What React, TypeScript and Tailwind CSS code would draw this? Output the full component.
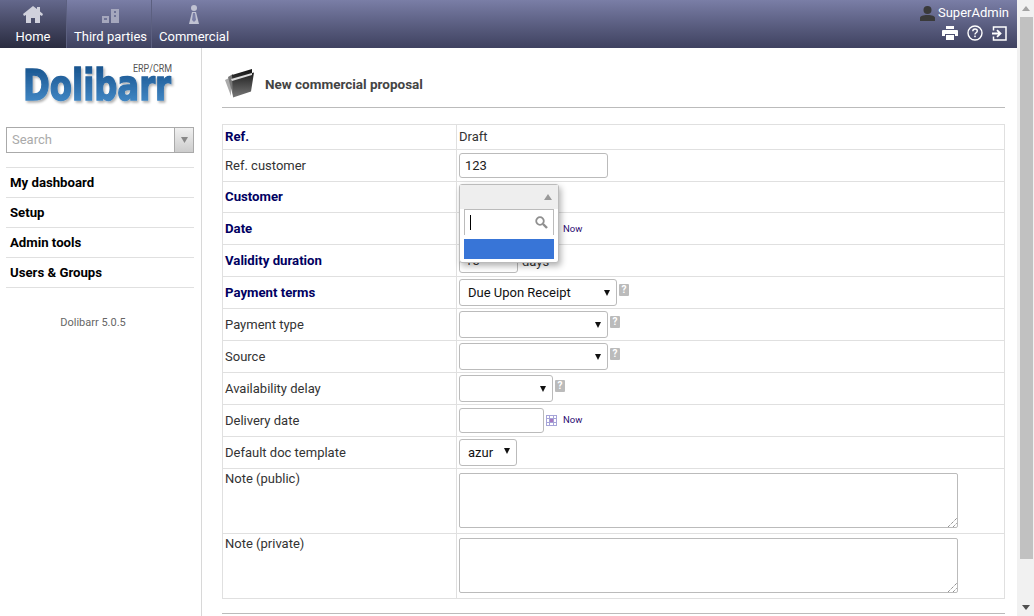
import React from "react";

function Help() {
  return (
    <span className="mt-[5px] inline-flex h-[12px] w-[10px] items-center justify-center rounded-[1px] bg-[#bbbbbb] text-[10px] font-bold leading-none text-white">
      ?
    </span>
  );
}

function Sel({ w, text, help = true, top = "" }: { w: string; text?: string; help?: boolean; top?: string }) {
  return (
    <div className="flex items-start gap-[2px]">
      <div className={`flex h-[27px] items-center justify-between rounded-[3px] border border-[#bbbbbb] pl-[8px] pr-[6px] text-[13px] text-[#111] ${w}`}>
        <span>{text}</span>
        <svg width="6" height="6" viewBox="0 0 6 6" className={top}>
          <path d="M0 0h6L3 6z" fill="#111" />
        </svg>
      </div>
      {help && <Help />}
    </div>
  );
}

function Cal() {
  return (
    <svg width="11" height="11" viewBox="0 0 11 11" className="ml-[2px]" shapeRendering="crispEdges">
      <rect x="0" y="0" width="11" height="11" fill="#a6a4d8" />
      <rect x="1" y="1" width="2" height="2" fill="#fff" />
      <rect x="4" y="1" width="3" height="2" fill="#fff" />
      <rect x="8" y="1" width="2" height="2" fill="#fff" />
      <rect x="1" y="4" width="2" height="3" fill="#fff" />
      <rect x="4" y="4" width="3" height="3" fill="#a878c0" />
      <rect x="8" y="4" width="2" height="3" fill="#fff" />
      <rect x="1" y="8" width="2" height="2" fill="#fff" />
      <rect x="4" y="8" width="3" height="2" fill="#fff" />
      <rect x="8" y="8" width="2" height="2" fill="#fff" />
    </svg>
  );
}

function Area() {
  return (
    <div className="relative h-[55px] w-[499px] -translate-y-[1px] rounded-[2px] border border-[#bbbbbb]">
      <svg width="9" height="9" viewBox="0 0 9 9" className="absolute bottom-0 right-0">
        <path d="M0 9L9 0M5 9L9 5" stroke="#666" strokeWidth="1" strokeDasharray="1 1" />
      </svg>
    </div>
  );
}

function Row({ label, bold, h, children, top }: { label: string; bold?: boolean; h: string; children?: React.ReactNode; top?: boolean }) {
  return (
    <div className={`flex border-b border-[#e0e0e0] ${h}`}>
      <div className={`flex w-[234px] shrink-0 border-r border-[#e0e0e0] pl-[2px] ${top ? "items-start" : "items-center"} ${bold ? "text-[13.2px] font-bold text-[#000061]" : "text-[13px] text-[#333]"}`}>
        {label}
      </div>
      <div className="flex flex-1 items-center pl-[2px] text-[13px] text-[#333]">{children}</div>
    </div>
  );
}

function NavItem({ label, cls, icon }: { label: string; cls: string; icon: React.ReactNode }) {
  return (
    <div className={`flex h-[48px] flex-col items-center ${cls}`}>
      <div className="flex h-[28px] items-center pt-[1px] blur-[0.5px]">{icon}</div>
      <span className="whitespace-nowrap text-[13px] leading-[17px] text-white">{label}</span>
    </div>
  );
}

function Logo() {
  return (
    <svg width="160" height="50" viewBox="0 0 160 50" className="ml-[12px]">
      <defs>
        <linearGradient id="lg" x1="0" y1="0" x2="0" y2="1">
          <stop offset="0" stopColor="#124c86" />
          <stop offset="1" stopColor="#4a92d0" />
        </linearGradient>
        <filter id="ls" x="-5%" y="-5%" width="115%" height="125%">
          <feDropShadow dx="2" dy="2" stdDeviation="1.2" floodColor="#000" floodOpacity="0.3" />
        </filter>
      </defs>
      <text
        transform="translate(5 40) scale(0.77 1)"
        fontFamily="DejaVu Sans"
        fontWeight="bold"
        fontSize="42"
        fill="url(#lg)"
        stroke="url(#lg)"
        strokeWidth="1.4"
        filter="url(#ls)"
      >
        Dolibarr
      </text>
      <text x="115" y="12" fontFamily="Roboto" fontSize="10" textLength="39" lengthAdjust="spacingAndGlyphs" fill="#555">
        ERP/CRM
      </text>
    </svg>
  );
}

export default function App() {
  return (
    <div className="flex h-[616px] w-[1034px] overflow-hidden bg-white font-['Roboto',sans-serif]">
      <div className="flex w-[1017px] shrink-0 flex-col">
        <div className="flex h-[48px] shrink-0 justify-between bg-gradient-to-b from-[#7a7ea6] to-[#3f4260]">
          <div className="flex">
            <NavItem
              label="Home"
              cls="w-[67px] border-r border-[#5c6080] bg-gradient-to-b from-[#64688c] to-[#2a2c40]"
              icon={
                <svg width="20" height="20" viewBox="0 0 20 20">
                  <path d="M10 1L0 9l1 2 2-1v8h5v-5h4v5h5v-8l2 1 1-2-3-2.5V2h-3v2z" fill="#d0d1dc" />
                </svg>
              }
            />
            <NavItem
              label="Third parties"
              cls="w-[85px] border-r border-[#5c6080] pl-[7px] pr-[4px]"
              icon={
                <svg width="20" height="20" viewBox="0 0 20 20" className="mt-[2px]">
                  <path d="M1 10h7v7H1zM10 3h8v14h-8z" fill="#a5a7bd" />
                  <path d="M3 12h3v2H3zM13 5h2v2h-2zM13 9h2v2h-2z" fill="#6f7396" />
                </svg>
              }
            />
            <NavItem
              label="Commercial"
              cls="pl-[7px]"
              icon={
                <svg width="14" height="22" viewBox="0 0 14 22">
                  <circle cx="7" cy="4" r="3" fill="#c0c2d2" />
                  <path d="M5 8h4l3 12H2z" fill="#c0c2d2" />
                  <path d="M6 9h2l1 7-2 2-2-2z" fill="#7a7ea6" />
                </svg>
              }
            />
          </div>
          <div className="flex flex-col items-end pr-[8px] pt-[4px]">
            <div className="flex items-center gap-[3px]">
              <svg width="15" height="16" viewBox="0 0 15 16" className="blur-[0.4px]">
                <circle cx="7.5" cy="5" r="4" fill="#3a3a3a" />
                <path d="M0 16v-3c0-2 3-3 7.5-3S15 11 15 13v3z" fill="#3a3a3a" />
              </svg>
              <span className="text-[13px] leading-[18px] text-white">SuperAdmin</span>
            </div>
            <div className="mr-[2px] mt-[3px] flex items-center gap-[9px] text-white">
              <svg width="16" height="14" viewBox="0 0 16 14">
                <path d="M4 0h8v3H4zM1 4h14a1 1 0 0 1 1 1v5h-3V8H3v2H0V5a1 1 0 0 1 1-1zM4 9h8v5H4z" fill="#fff" />
              </svg>
              <svg width="16" height="16" viewBox="0 0 16 16" fill="none">
                <circle cx="8" cy="8" r="7" stroke="#fff" strokeWidth="1.4" />
                <path d="M5.8 6.2C5.8 4.8 7 4 8 4s2.3.7 2.3 2.1c0 1.7-2.3 1.7-2.3 3.4" stroke="#fff" strokeWidth="1.4" />
                <rect x="7.2" y="10.6" width="1.6" height="1.6" fill="#fff" />
              </svg>
              <svg width="15" height="15" viewBox="0 0 15 15" fill="none">
                <path d="M1.5 4.5V1h12.5v13H1.5v-3.5" stroke="#fff" strokeWidth="1.5" />
                <path d="M0 7.5h7.5M5 4.2l3.5 3.3L5 10.8" stroke="#fff" strokeWidth="1.8" />
              </svg>
            </div>
          </div>
        </div>

        <div className="flex min-h-0 flex-1">
          <div className="w-[202px] shrink-0 border-r border-[#d8d8d8] pl-[6px] pr-[7px]">
            <div className="h-[59px] w-full pt-[12px]">
              <Logo />
            </div>
            <div className="mt-[20px] flex h-[26px] w-[188px] border border-[#aaaaaa]">
              <span className="flex flex-1 items-center pl-[5px] text-[13px] text-[#aaaaaa]">Search</span>
              <div className="flex w-[19px] items-center justify-center border-l border-[#aaaaaa] bg-gradient-to-b from-[#f0f0f0] to-[#cccccc]">
                <svg width="7" height="6" viewBox="0 0 7 6">
                  <path d="M0 0h7L3.5 6z" fill="#888" />
                </svg>
              </div>
            </div>
            <div className="mt-[14px] border-t border-[#e0e0e0]">
              {["My dashboard", "Setup", "Admin tools", "Users & Groups"].map((t) => (
                <div key={t} className="flex h-[30px] items-center border-b border-[#e0e0e0] pl-[4px] text-[13.2px] font-bold text-[#000]">
                  {t}
                </div>
              ))}
            </div>
            <div className="mt-[28px] pr-[14px] text-center text-[11px] leading-[14px] text-[#666]">Dolibarr 5.0.5</div>
          </div>

          <div className="relative min-w-0 flex-1 pl-[20px] pr-[12px]">
            <div className="flex h-[60px] items-center border-b border-[#bbbbbb] pl-[2px] pt-[13px]">
              <svg width="30" height="30" viewBox="0 0 30 30" className="-mt-[3px]">
                <defs>
                  <linearGradient id="fg" x1="0" y1="0" x2="0" y2="1">
                    <stop offset="0" stopColor="#111" />
                    <stop offset="1" stopColor="#777" />
                  </linearGradient>
                </defs>
                <path d="M1 12l6-3v19z" fill="#aaa" />
                <path d="M4 9l5-3v22z" fill="#777" />
                <path d="M8 7l20-6v4l2-.5-3 19-18 6z" fill="url(#fg)" />
                <path d="M7 11l21-6v2L8 13z" fill="#ddd" />
              </svg>
              <span className="ml-[11px] text-[13.5px] font-bold text-[#444]">New commercial proposal</span>
            </div>

            <div className="mt-[16px] border-x border-t border-[#e0e0e0]">
              <Row label="Ref." bold h="h-[25px]">Draft</Row>
              <Row label="Ref. customer" h="h-[32px]">
                <div className="flex h-[25px] w-[149px] items-center rounded-[3px] border border-[#bbbbbb] px-[5px] text-[13px] text-[#222]">123</div>
              </Row>
              <Row label="Customer" bold h="h-[31px]" />
              <Row label="Date" bold h="h-[32px]">
                <div className="ml-[87px] mt-[2px] flex items-center gap-[5px]">
                  <span className="w-[12px]" />
                  <span className="text-[9.5px] text-[#2a0a70]">Now</span>
                </div>
              </Row>
              <Row label="Validity duration" bold h="h-[32px]">
                <div className="flex items-center gap-[4px]">
                  <div className="flex h-[25px] w-[59px] items-center rounded-[3px] border border-[#bbbbbb] pl-[5px] text-[13px]">15</div>
                  <span className="mt-[2px]">days</span>
                </div>
              </Row>
              <Row label="Payment terms" bold h="h-[32px]">
                <Sel w="w-[158px]" text="Due Upon Receipt" />
              </Row>
              <Row label="Payment type" h="h-[32px]"><Sel w="w-[149px]" /></Row>
              <Row label="Source" h="h-[32px]"><Sel w="w-[149px]" /></Row>
              <Row label="Availability delay" h="h-[32px]"><Sel w="w-[94px]" /></Row>
              <Row label="Delivery date" h="h-[32px]">
                <div className="flex items-center">
                  <div className="h-[25px] w-[85px] rounded-[3px] border border-[#bbbbbb]" />
                  <Cal />
                  <span className="ml-[6px] text-[9.5px] text-[#2a0a70]">Now</span>
                </div>
              </Row>
              <Row label="Default doc template" h="h-[32px]">
                <Sel w="w-[58px]" text="azur" help={false} top="-mt-[3px]" />
              </Row>
              <Row label="Note (public)" h="h-[65px]" top>
                <Area />
              </Row>
              <Row label="Note (private)" h="h-[65px]" top>
                <Area />
              </Row>
            </div>
            <div className="mt-[14px] border-b border-[#bbbbbb]" />

            <div className="absolute left-[257px] top-[136px] h-[79px] w-[100px] rounded-[3px] border border-[#bbbbbb] bg-white shadow-[2px_3px_6px_rgba(0,0,0,0.3)]">
              <div className="flex h-[24px] items-center justify-end bg-[#eeeeee] pr-[6px]">
                <svg width="8" height="6" viewBox="0 0 8 6">
                  <path d="M0 6h8L4 0z" fill="#999" />
                </svg>
              </div>
              <div className="mx-[4px] flex h-[26px] items-center justify-between border border-b-0 border-[#bbbbbb] pl-[5px] pr-[5px]">
                <span className="h-[15px] w-px bg-black" />
                <svg width="13" height="13" viewBox="0 0 13 13" fill="none">
                  <circle cx="5" cy="5" r="3.8" stroke="#8f8f8f" strokeWidth="1.8" />
                  <path d="M8 8l4 4" stroke="#8f8f8f" strokeWidth="2.4" />
                </svg>
              </div>
              <div className="mx-[4px] mt-[4px] h-[20px] bg-[#3875d7]" />
            </div>
          </div>
        </div>
      </div>

      <div className="flex w-[17px] shrink-0 flex-col items-center bg-[#f1f1f1]">
        <div className="flex h-[17px] items-center justify-center">
          <svg width="8" height="5" viewBox="0 0 8 5"><path d="M0 5h8L4 0z" fill="#a3a3a3" /></svg>
        </div>
        <div className="ml-[1px] h-[542px] w-[13px] bg-[#c1c1c1]" />
        <div className="mt-auto flex h-[17px] items-center justify-center">
          <svg width="8" height="5" viewBox="0 0 8 5"><path d="M0 0h8L4 5z" fill="#505050" /></svg>
        </div>
      </div>
    </div>
  );
}
